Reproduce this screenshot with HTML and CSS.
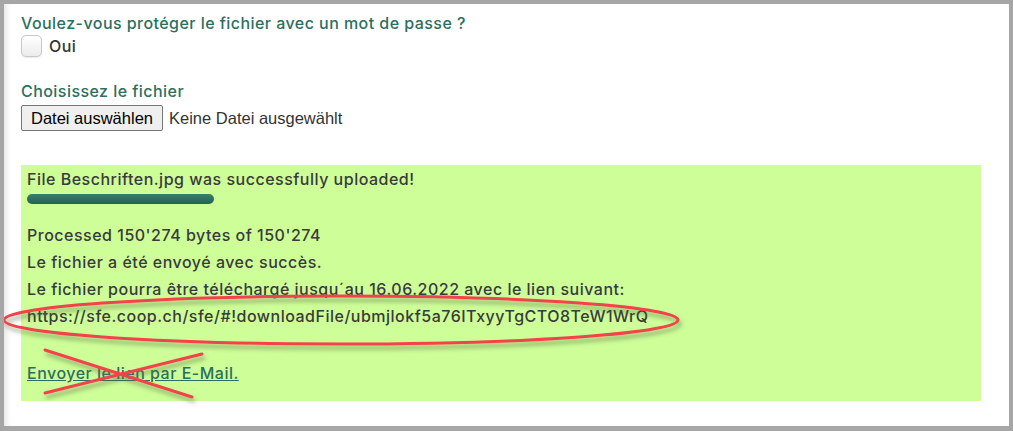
FILE: index.html
```html
<!DOCTYPE html>
<html lang="fr">
<head>
<meta charset="utf-8">
<title>Upload</title>
<link rel="stylesheet" href="styles.css">
</head>
<body>
<div class="frame">
  <div class="panel">
    <div class="label">Voulez-vous protéger le fichier avec un mot de passe ?</div>
    <div class="check-row">
      <span class="checkbox"></span>
      <span class="check-text">Oui</span>
    </div>
    <div class="label label-file">Choisissez le fichier</div>
    <div class="file-row">
      <span class="file-btn">Datei auswählen</span>
      <span class="file-none">Keine Datei ausgewählt</span>
    </div>
    <div class="result">
      <div class="line">File Beschriften.jpg was successfully uploaded!</div>
      <div class="bar"></div>
      <div class="line line-processed">Processed 150'274 bytes of 150'274</div>
      <div class="line">Le fichier a été envoyé avec succès.</div>
      <div class="line">Le fichier pourra être téléchargé jusqu´au 16.06.2022 avec le lien suivant:</div>
      <div class="line url">https://sfe.coop.ch/sfe/#!downloadFile/ubmjlokf5a76ITxyyTgCTO8TeW1WrQ</div>
      <div class="line mail"><a href="#">Envoyer le lien par E-Mail.</a></div>
    </div>
    <svg class="marks" width="1005" height="422" viewBox="0 0 1005 422">
      <defs>
        <filter id="sh" x="-10%" y="-50%" width="120%" height="200%">
          <feGaussianBlur in="SourceAlpha" stdDeviation="2"/>
          <feOffset dx="2" dy="4" result="b"/>
          <feFlood flood-color="#5a6a40" flood-opacity="0.55"/>
          <feComposite in2="b" operator="in"/>
          <feMerge><feMergeNode/><feMergeNode in="SourceGraphic"/></feMerge>
        </filter>
      </defs>
      <g filter="url(#sh)" fill="none" stroke="#f2434b" stroke-width="3" stroke-linecap="round">
        <ellipse cx="337" cy="316" rx="337" ry="24"/>
        <line x1="41" y1="346" x2="188" y2="393"/>
        <line x1="198" y1="350" x2="41" y2="389"/>
      </g>
    </svg>
  </div>
</div>
</body>
</html>
```
FILE: styles.css
```css
html, body {
  margin: 0;
  padding: 0;
}
body {
  background: #a6a6a6;
  width: 1013px;
  height: 431px;
  overflow: hidden;
}
.frame {
  padding: 4px 4px 5px 4px;
}
.panel {
  position: relative;
  background: #ffffff;
  height: 422px;
  box-sizing: border-box;
  padding: 8px 28px 0 17px;
  box-shadow: inset 6px 0 6px -4px rgba(0,0,0,0.12);
  font-family: Inter, "Liberation Sans", sans-serif;
}
.label {
  color: #2b6f60;
  font-size: 16px;
  font-weight: 500;
  line-height: 22px;
  letter-spacing: 0.45px;
}
.check-row {
  display: flex;
  align-items: center;
  gap: 7px;
  margin-top: 1px;
  height: 22px;
}
.checkbox {
  width: 19px;
  height: 20px;
  border: 1px solid #c8c8c8;
  border-radius: 5px;
  background: linear-gradient(#ffffff, #ececec);
  box-shadow: 0 1px 1px rgba(0,0,0,0.08);
}
.check-text {
  color: #333333;
  font-size: 16px;
  font-weight: 500;
  letter-spacing: 0.45px;
}
.label-file {
  margin-top: 23px;
}
.file-row {
  display: flex;
  align-items: center;
  gap: 6px;
  margin-top: 3px;
  font-family: "Liberation Sans", Arial, sans-serif;
  font-size: 16px;
}
.file-btn {
  box-sizing: border-box;
  height: 26px;
  padding: 0 9px;
  display: flex;
  align-items: center;
  border: 1px solid #767676;
  border-radius: 2px;
  background: #efefef;
  color: #000;
  font-size: 16.5px;
}
.file-none {
  color: #333;
  font-size: 16.5px;
}
.result {
  margin-top: 34px;
  width: 960px;
  height: 236px;
  box-sizing: border-box;
  background: #cdfe98;
  padding: 1px 6px 0 6px;
  color: #3a3a3a;
  font-size: 16px;
  font-weight: 500;
  letter-spacing: 0.5px;
}
.line {
  line-height: 27px;
}
.bar {
  width: 187px;
  height: 10px;
  border-radius: 5px;
  background: linear-gradient(#34806c, #25614f);
  margin-top: 1px;
}
.line-processed {
  margin-top: 18px;
}
.mail {
  margin-top: 30px;
}
.mail a {
  color: #2b6f60;
  text-decoration: underline;
}
.marks {
  position: absolute;
  left: 0;
  top: 0;
  pointer-events: none;
}
```
